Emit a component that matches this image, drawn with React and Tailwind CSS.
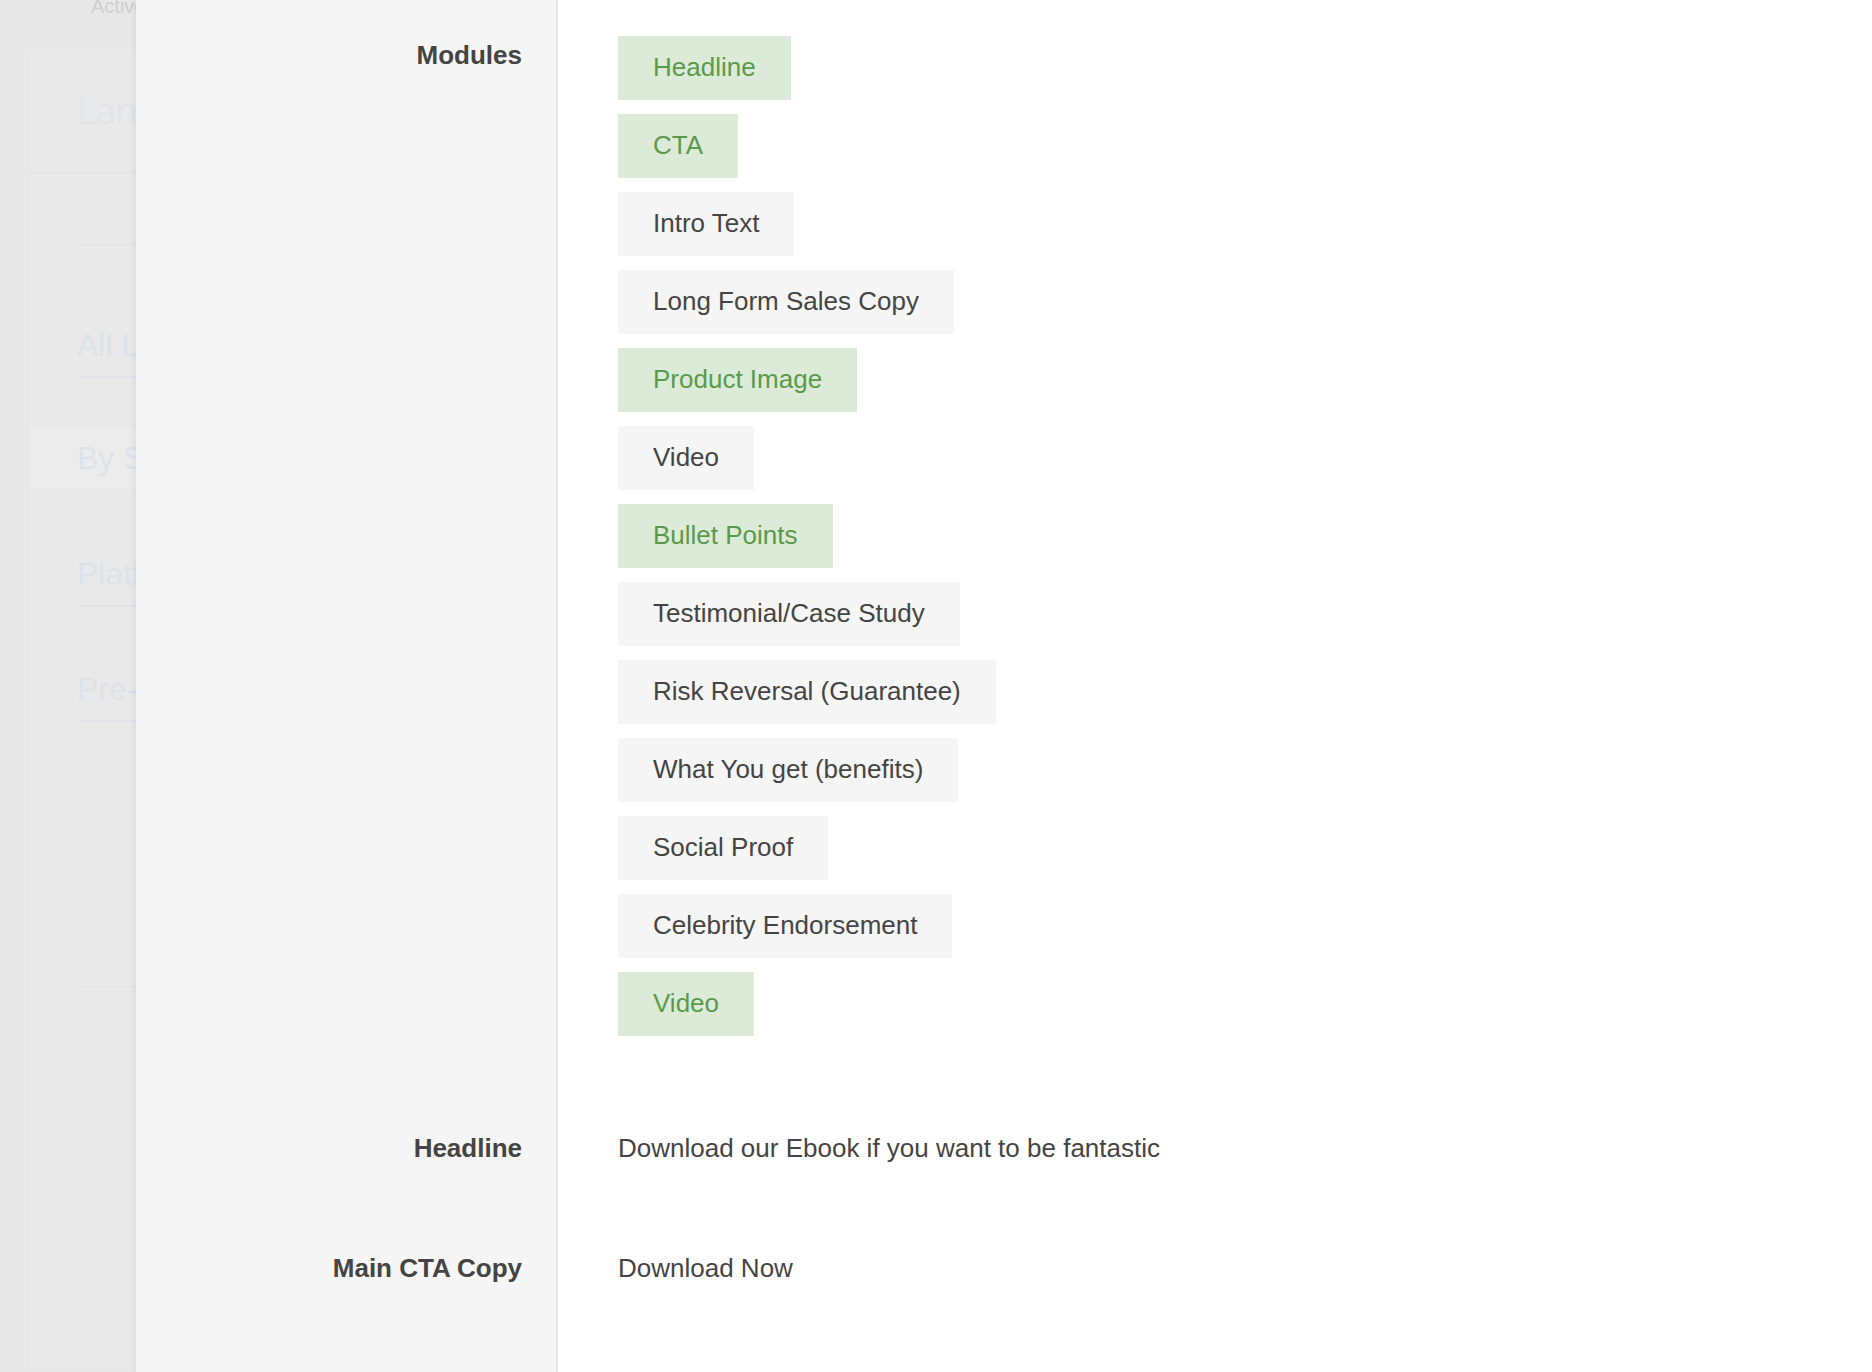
import React from 'react';

const modules = [
  { name: 'Headline', on: true },
  { name: 'CTA', on: true },
  { name: 'Intro Text', on: false },
  { name: 'Long Form Sales Copy', on: false },
  { name: 'Product Image', on: true },
  { name: 'Video', on: false },
  { name: 'Bullet Points', on: true },
  { name: 'Testimonial/Case Study', on: false },
  { name: 'Risk Reversal (Guarantee)', on: false },
  { name: 'What You get (benefits)', on: false },
  { name: 'Social Proof', on: false },
  { name: 'Celebrity Endorsement', on: false },
  { name: 'Video', on: true },
];

const sans = { fontFamily: '"Liberation Sans", Arial, sans-serif' };

const Chip = ({ name, on }) => (
  <div
    className={
      on
        ? 'h-[64px] flex items-center px-[35px] pb-[2px] bg-[#dcebd8] text-[#5a9a4b] text-[26px] leading-[30px] whitespace-nowrap'
        : 'h-[64px] flex items-center px-[35px] pb-[2px] bg-[#f5f5f5] text-[#444444] text-[26px] leading-[30px] whitespace-nowrap'
    }
  >
    {name}
  </div>
);

// faded page that sits behind the slide-in panel
const BackPage = () => (
  <div className="w-[136px] shrink-0 overflow-hidden bg-[#e8e8e8]">
    <div className="w-[420px]" style={sans}>
      <div className="h-[54px] pl-[91px]">
        <div className="-mt-[4px] text-[20px] leading-[20px] text-[#cfcfcf]">Active</div>
      </div>
      <div className="ml-[28px] bg-[#e9e9e9] border-l border-[#e4e4e4] min-h-[1318px]">
        <div className="h-[123px] border-b border-[#e2e2e2] pl-[48px] pt-[40px]">
          <div
            className="text-[37px] leading-[40px] font-light text-[#dde3ea]"
            style={{ fontFamily: '"Open Sans", sans-serif' }}
          >
            Landing Pages
          </div>
        </div>
        <div className="ml-[50px] h-[72px] border-b border-[#e3e3e3]" />
        <div className="ml-[50px] mt-[82px] pb-[13px] border-b-2 border-[#dfe4ea] text-[32px] leading-[36px] text-[#dde2e8]">
          <div className="-ml-[2px]">All Landing Pages</div>
        </div>
        <div className="mt-[50px] h-[61px] bg-[#ececec] pl-[48px] pt-[12px] text-[32px] leading-[36px] text-[#dde2e8]">
          By Status
        </div>
        <div className="ml-[50px] mt-[67px] pb-[13px] border-b-2 border-[#dfe4ea] text-[32px] leading-[36px] text-[#dde2e8]">
          <div className="-ml-[2px]">Platform</div>
        </div>
        <div className="ml-[50px] mt-[64px] pb-[13px] border-b-2 border-[#dfe4ea] text-[32px] leading-[36px] text-[#dde2e8]">
          <div className="-ml-[2px]">Pre-Built</div>
        </div>
        <div className="ml-[50px] h-[265px] border-b border-[#e3e3e3]" />
      </div>
    </div>
  </div>
);

const App = () => {
  return (
    <div className="flex w-full min-h-[1372px] h-[1372px] overflow-hidden bg-[#e8e8e8]" style={sans}>
      <BackPage />
      <div className="flex-1 bg-white shadow-[-3px_0_6px_rgba(0,0,0,0.05)] grid grid-cols-[422px_1fr] grid-rows-[auto_auto_auto_1fr] text-[#444444]">
        <div className="bg-[#f5f5f5] border-r-2 border-[#e6e6e6] pr-[34px] pt-[40px] text-right text-[26px] leading-[30px] font-bold">
          Modules
        </div>
        <div className="pl-[60px] pt-[36px] flex flex-col items-start gap-[14px]">
          {modules.map((m, i) => (
            <Chip key={i} name={m.name} on={m.on} />
          ))}
        </div>

        <div className="bg-[#f5f5f5] border-r-2 border-[#e6e6e6] pr-[34px] pt-[97px] text-right text-[26px] leading-[30px] font-bold">
          Headline
        </div>
        <div className="pl-[60px] pt-[97px] text-[26px] leading-[30px]">
          Download our Ebook if you want to be fantastic
        </div>

        <div className="bg-[#f5f5f5] border-r-2 border-[#e6e6e6] pr-[34px] pt-[90px] text-right text-[26px] leading-[30px] font-bold">
          Main CTA Copy
        </div>
        <div className="pl-[60px] pt-[90px] text-[26px] leading-[30px]">Download Now</div>

        <div className="bg-[#f5f5f5] border-r-2 border-[#e6e6e6]" />
        <div />
      </div>
    </div>
  );
};

export default App;
